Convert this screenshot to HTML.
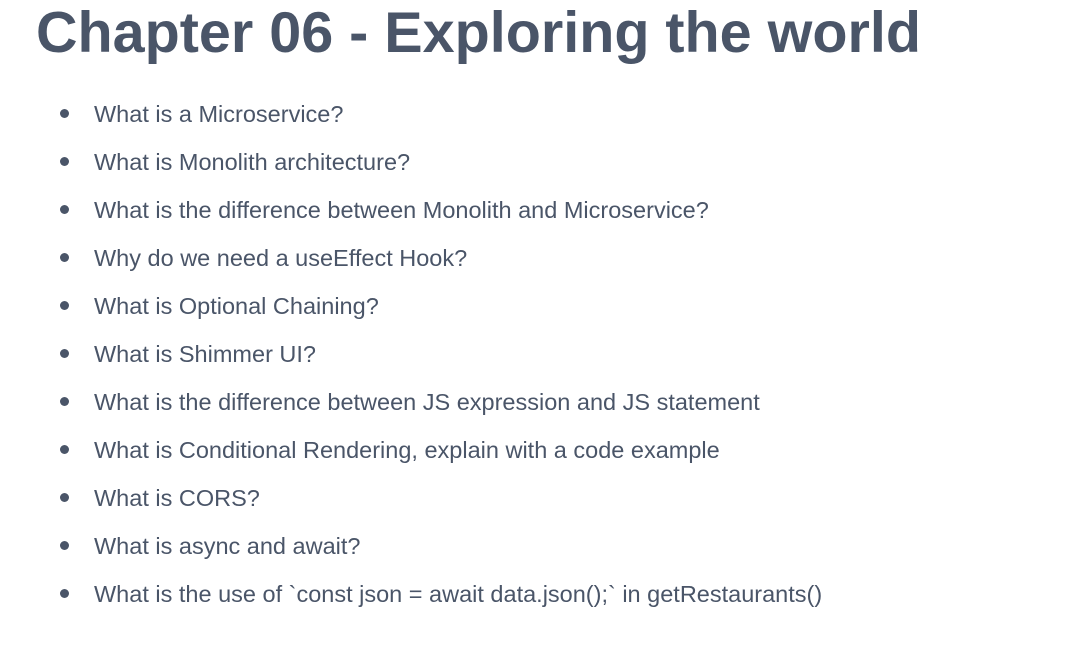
<!DOCTYPE html>
<html><head><meta charset="utf-8"><style>
html,body{margin:0;padding:0;background:#fff;width:1077px;height:646px;overflow:hidden}
body{font-family:"Liberation Sans",sans-serif;color:#4a5568}
h1{position:absolute;left:36px;top:-3px;margin:0;font-size:57.5px;line-height:72px;font-weight:bold;color:#4a5568;white-space:nowrap}
ul{position:absolute;left:0;top:90px;margin:0;padding:0;list-style:none}
li{position:relative;padding-left:94px;height:48px;line-height:48px;font-size:23.5px;color:#4a5568;white-space:nowrap}
li:before{content:"";position:absolute;left:60px;top:19px;width:9px;height:9px;border-radius:50%;background:#4a5568}
</style></head><body>
<h1>Chapter 06 - Exploring the world</h1>
<ul>
<li>What is a Microservice?</li>
<li>What is Monolith architecture?</li>
<li>What is the difference between Monolith and Microservice?</li>
<li>Why do we need a useEffect Hook?</li>
<li>What is Optional Chaining?</li>
<li>What is Shimmer UI?</li>
<li>What is the difference between JS expression and JS statement</li>
<li>What is Conditional Rendering, explain with a code example</li>
<li>What is CORS?</li>
<li>What is async and await?</li>
<li>What is the use of `const json = await data.json();` in getRestaurants()</li>
</ul>
</body></html>
